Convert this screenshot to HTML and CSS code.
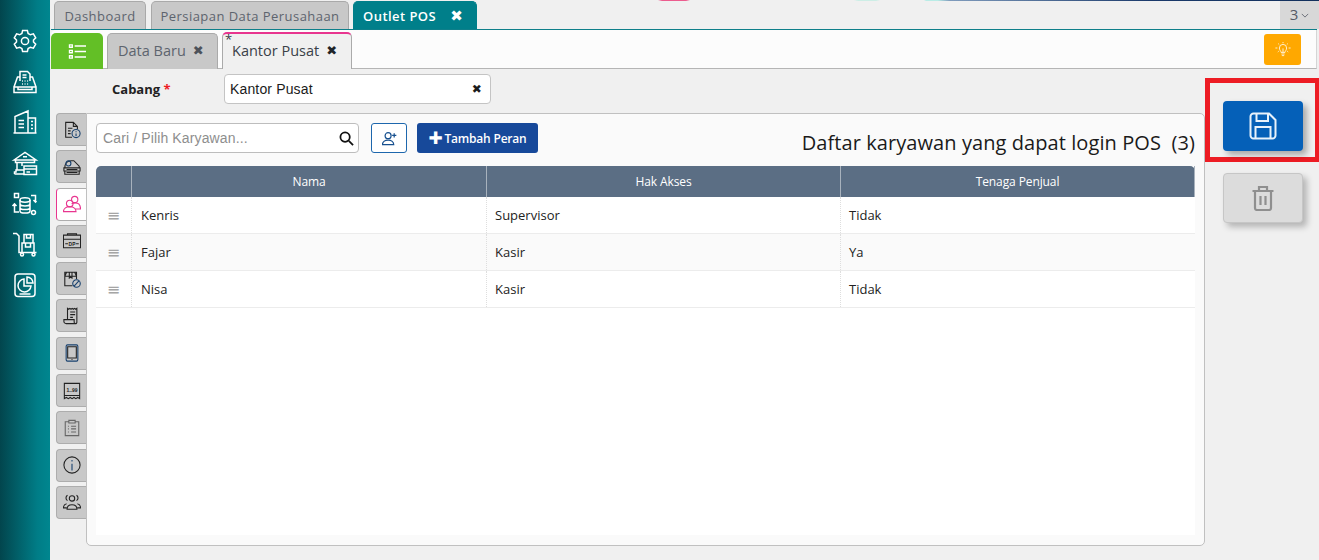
FILE: index.html
```html
<!DOCTYPE html>
<html lang="id">
<head>
<meta charset="utf-8">
<title>Outlet POS</title>
<link rel="stylesheet" href="styles.css">
</head>
<body>
<div class="app">
  <nav class="sidebar">
    <svg class="side-icon" viewBox="0 0 24 24"><path d="M9.600 1.500h4.800l.7 3 2.300 1.300 3-.9 2.300 4-2.200 2.100v2l2.200 2.100-2.300 4-3-.9-2.300 1.300-.7 3H9.600l-.7-3-2.300-1.300-3 .9-2.300-4 2.200-2.100v-2L1.300 8.900l2.300-4 3 .9 2.300-1.300z"/><circle cx="12" cy="12" r="3.600"/></svg>
    <svg class="side-icon" viewBox="0 0 24 24"><path d="M7 11V1.500h7.500L17 4v7M7 7H4.500L1 17M17 7h2.500L23 17M1 17v5.500h22V17zM5 17h14v2.500H5zM9.500 5h4M9.500 7.500h4M9 11h.9M11.600 11h.9M14.200 11h.9M9 14h.9M11.600 14h.9M14.200 14h.9"/></svg>
    <svg class="side-icon" viewBox="0 0 24 24"><path d="M.5 23h23M2 23V6.500L15 1v22M15 8h7.500v15M5.500 10.500H11M5.500 14H11M5.500 17.500H11M18 11.500h2M18 15h2M18 18.500h2"/></svg>
    <svg class="side-icon" viewBox="0 0 24 24"><path d="M1 9 12 1.500 23 9zM2.500 9v2.500h19V9M10 5.800h4M4 11.500v7.500M9 11.500V15M1.500 23v-2H3v-2h7.500M11 15h12.500v8.500H11zM11 18h12.500M13.500 21h3.500M10.500 23H1.500"/></svg>
    <svg class="side-icon" viewBox="0 0 24 24"><ellipse cx="12" cy="8" rx="5" ry="2.200"/><path d="M7 8v11c0 2.800 10 2.800 10 0V8M7 11.800c0 2.800 10 2.800 10 0M7 15.500c0 2.800 10 2.800 10 0M1.500 1.500h4v4h-4zM18 3.500h4.500V10M20.500 8l2 2.200 1-1.200M6 20H1.500v-8M-.5 14l2-2.200 2 2.200"/><circle cx="20.500" cy="20.500" r="2"/></svg>
    <svg class="side-icon" viewBox="0 0 24 24"><path d="M0 1.500h3.500L6 4v16.500h17.500M9 11h12v9.500H9zM11 2.500h9V11h-9zM13.500 2.500V6h4V2.500M12.500 11v4h5v-4"/><circle cx="9" cy="22.500" r="1.500"/><circle cx="20.500" cy="22.500" r="1.500"/></svg>
    <svg class="side-icon" viewBox="0 0 24 24"><rect x="2" y="1" width="20" height="22.500" rx="3"/><path d="M11 6a6.500 6.500 0 1 0 7 7h-7zM14 4a6 6 0 0 1 6 6h-6zM6.500 21h11"/></svg>
  </nav>

  <div class="workspace">
    <div class="top-strip"></div>
    <div class="main-tabs">
      <div class="main-tab">Dashboard</div>
      <div class="main-tab main-tab-wide">Persiapan Data Perusahaan</div>
      <div class="main-tab main-tab-active">Outlet POS <span class="main-close">&#10006;</span></div>
      <div class="tab-count">3 <svg class="chev" viewBox="0 0 10 6"><path d="M1 1l4 4 4-4"/></svg></div>
    </div>

    <div class="panel">
      <div class="sub-tabs">
        <button class="list-btn"><svg viewBox="0 0 20 18"><path d="M1.500 2h3v2.500h-3zM1.500 7.800h3v2.500h-3zM1.500 13.500h3V16h-3zM7 3.200h12M7 9h12M7 14.800h12"/></svg></button>
        <div class="sub-tab">Data Baru <span class="sub-close">&#10006;</span></div>
        <div class="sub-tab sub-tab-active"><sup class="mod">*</sup>Kantor Pusat <span class="sub-close sub-close-dark">&#10006;</span></div>
        <button class="lamp-btn"><svg viewBox="0 0 20 20"><path d="M7.500 13c0-2-2-2.500-2-5.500a4.500 4.500 0 0 1 9 0c0 3-2 3.500-2 5.500zM8 15h4M8.500 17h3M10 13V8M10 0v1.500M3 7.500H.5M19.500 7.500H17M4 2l1.200 1.200M16 2l-1.200 1.200M3.500 12.500l1.200-1M16.500 12.500l-1.200-1"/></svg></button>
      </div>

      <div class="body-grid">
        <div class="form-area">
          <div class="form-row">
            <label class="field-label">Cabang <span class="req">*</span></label>
            <div class="select-box"><span>Kantor Pusat</span><span class="select-x">&#10006;</span></div>
          </div>

          <div class="detail">
            <div class="side-tabs">
              <div class="side-tab"><svg viewBox="0 0 20 20"><path d="M10 18H3V1.500h8.500L16 6v3M11.500 1.500V6H16M5.500 8h5M5.500 11h3M5.500 14h3"/><circle class="hl" cx="14.500" cy="14" r="4.500"/><path class="hl" d="M14.500 11.500v1M14.500 13.800v3"/></svg></div>
              <div class="side-tab"><svg viewBox="0 0 20 20"><path d="M2 11c0-5 3-8 7-8h3l6 6v2zM1 11h18v3.500H1zM2 14.500h16v3.500H2zM4 16.200h12M4 12.700h12"/><circle class="hl" cx="6" cy="6" r="2.800"/></svg></div>
              <div class="side-tab side-tab-active"><svg viewBox="0 0 20 20"><circle cx="13" cy="5" r="3.500"/><path d="M9.500 9.800c1.500-1.300 6.500-1.300 8 0 1 1 2 3 2 5.700h-6"/><circle cx="7.500" cy="9.500" r="3.700"/><path d="M.5 18.500c0-7.500 14-7.500 14 0z"/></svg></div>
              <div class="side-tab"><svg viewBox="0 0 20 20"><path d="M.5 3.500h19v14H.5zM.5 8h19M5 3.500V2h10v1.500M2.500 13h3M14.500 13h3"/><text class="mini" x="10" y="15">DP</text></svg></div>
              <div class="side-tab"><svg viewBox="0 0 20 20"><path d="M10.500 17.500H2V2.500h13v7.500M2 7l2-4.500M15 7l-2-4.500M2 7h13M7 2.500V9l1.500-1L10 9V2.500"/><circle class="hl" cx="15" cy="15" r="4.200"/><path class="hl" d="M12.300 18l5.400-6"/></svg></div>
              <div class="side-tab"><svg viewBox="0 0 20 20"><path d="M5 14V1.500l1.300 1 1.300-1 1.300 1 1.300-1 1.300 1 1.300-1 1.300 1 1.300-1V17a1.500 1.500 0 0 1-3 0v-3zM13.500 18.500H3.500A2.500 2.500 0 0 1 1 16v-2h4M8 5.500h5.500M8 8.500h5.500M8 11.500h3"/></svg></div>
              <div class="side-tab"><svg viewBox="0 0 20 20"><rect class="hl" x="3.500" y="1" width="13" height="18" rx="1.500"/><path d="M5.200 3h9.600v12.500H5.200zM9.500 17.300h1"/></svg></div>
              <div class="side-tab"><svg viewBox="0 0 20 20"><path d="M1.500 1.500h17v17l-2.100-1.300-2.100 1.300-2.100-1.300-2.100 1.300-2.100-1.300-2.100 1.300-2.200-1.300-2.200 1.300zM1.500 15h17"/><text class="mini" x="10" y="11">1..99</text></svg></div>
              <div class="side-tab"><svg class="muted" viewBox="0 0 20 20"><path d="M6.500 3H2.500v15.500h15V3h-4M6.500 1.500h7v3h-7zM9 8h5.500M9 11h5.500M9 14.500h5.500M5.500 8h1M5.500 11h1M5.500 14.500h1"/></svg></div>
              <div class="side-tab"><svg viewBox="0 0 20 20"><circle cx="10" cy="10" r="9"/><path class="hl" d="M10 4.500v1.500M10 8.500V16"/></svg></div>
              <div class="side-tab"><svg viewBox="0 0 20 20"><circle cx="10" cy="6" r="3"/><path d="M5 2.500a3.500 3.500 0 0 0 0 6M15 2.500a3.500 3.500 0 0 1 0 6M4.500 18c0-6.500 11-6.500 11 0zM4 16.500H.5c0-2.500 1-4 3.500-4.500M16 16.500h3.500c0-2.500-1-4-3.500-4.500"/></svg></div>
            </div>

            <section class="card">
              <div class="toolbar">
                <div class="search-box"><span class="placeholder">Cari / Pilih Karyawan...</span><svg class="search-icon" viewBox="0 0 16 16"><circle cx="6.500" cy="6.500" r="5"/><path d="M10.500 10.500l4.500 4.500"/></svg></div>
                <button class="user-btn"><svg viewBox="0 0 16 16"><circle cx="6.500" cy="5" r="3.200"/><path d="M.5 14.500c0-6.500 12-6.500 12 0zM13 2.500v4.500M10.800 4.700h4.500"/></svg></button>
                <button class="add-btn"><span class="plus">&#10010;</span>Tambah Peran</button>
                <h2 class="list-title">Daftar karyawan yang dapat login POS&nbsp; (3)</h2>
              </div>
              <div class="table">
                <div class="row head">
                  <div class="cell"></div><div class="cell">Nama</div><div class="cell">Hak Akses</div><div class="cell">Tenaga Penjual</div>
                </div>
                <div class="row">
                  <div class="cell handle">&#8801;</div><div class="cell">Kenris</div><div class="cell">Supervisor</div><div class="cell">Tidak</div>
                </div>
                <div class="row alt">
                  <div class="cell handle">&#8801;</div><div class="cell">Fajar</div><div class="cell">Kasir</div><div class="cell">Ya</div>
                </div>
                <div class="row">
                  <div class="cell handle">&#8801;</div><div class="cell">Nisa</div><div class="cell">Kasir</div><div class="cell">Tidak</div>
                </div>
              </div>
            </section>
          </div>
        </div>

        <aside class="actions">
          <div class="save-mark">
            <button class="save-btn"><svg viewBox="0 0 28 28"><path d="M1.500 4.500a3 3 0 0 1 3-3h15.500l6.500 6.500v15.500a3 3 0 0 1-3 3h-19a3 3 0 0 1-3-3zM7.500 1.500v7.500h11.500V1.500M6.500 26.500V15h15v11.500"/></svg></button>
          </div>
          <button class="del-btn"><svg viewBox="0 0 24 26"><path d="M1.500 6h21M8 6V2h8v4M4 6v17a2 2 0 0 0 2 2h12a2 2 0 0 0 2-2V6M9.500 11v9M14.500 11v9"/></svg></button>
        </aside>
      </div>
    </div>
  </div>
</div>
</body>
</html>
```

FILE: styles.css
```css
* { box-sizing: border-box; }
html, body { margin: 0; height: 100%; }
body { font-family: "Open Sans", "Noto Sans", sans-serif; background: #f0f0f0; overflow: hidden; }
button { padding: 0; border: 0; font: inherit; }
svg { display: block; fill: none; stroke: currentColor; }

.app { display: flex; height: 560px; }

.sidebar {
  width: 50px; flex: none; padding-top: 29px;
  background: linear-gradient(90deg, #02454d 0%, #007d87 75%, #00868f 100%);
  display: flex; flex-direction: column; align-items: center; gap: 16.700px;
}
.side-icon { width: 24px; height: 24px; color: #fff; stroke-width: 1.500; overflow: visible; }

.workspace { flex: 1; min-width: 0; display: flex; flex-direction: column; background: #f0f0f0; }
.top-strip {
  height: 1px; flex: none;
  background: linear-gradient(90deg, #f0f0f0 0 608px, #ec5c8e 612px 636px, #f0f0f0 640px 804px, #cdeee6 808px 826px, #f0f0f0 830px 874px, #b9ece6 876px 888px, #7f9bbc 900px, #1b3a6b 1100px, #12305c 100%);
}

.main-tabs { display: flex; height: 28px; flex: none; padding-left: 4px; gap: 5px; }
.main-tab {
  width: 92px; display: flex; align-items: center; justify-content: center;
  background: #c8c8c8; border: 1px solid #a9a9a9; border-bottom: 0; border-radius: 5px 5px 0 0;
  font-size: 13px; letter-spacing: .45px; color: #5d646e; white-space: nowrap;
}
.main-tab-wide { width: 198px; }
.main-tab-active {
  width: 124px; margin-left: -1px; background: #007f8a; border-color: #007f8a; color: #fff; font-weight: 600; justify-content: flex-start; padding-left: 9px;
}
.main-close { margin-left: 14px; font-size: 15px; font-family: "DejaVu Sans", sans-serif; }
.tab-count {
  margin-left: auto; width: 39px; background: #d8d8d8; color: #555b66; font-size: 15px;
  display: flex; align-items: center; justify-content: center; gap: 3px; padding-bottom: 2px;
}
.chev { width: 8px; height: 5px; stroke-width: 1; margin-top: 2px; }

.panel {
  flex: 1; min-height: 0; margin: 0 2px 0 1px; display: flex; flex-direction: column;
  border-top: 1px solid #0e7f8a;
}
.sub-tabs {
  height: 39px; flex: none; display: flex; align-items: flex-end; gap: 4px;
  background: #fcfcfc; border-bottom: 1px solid #b5b5b5; border-right: 1px solid #d5d5d5; border-radius: 5px 0 0 0;
}
.list-btn {
  width: 52px; height: 36px; background: #63bf26; color: #fff; border-radius: 5px 5px 0 0;
  display: flex; align-items: center; justify-content: center; margin-bottom: -1px;
}
.list-btn svg { width: 19px; height: 17px; stroke-width: 1.400; }
.sub-tab {
  width: 111px; height: 36px; background: #c8c8c8; border: 1px solid #aaa; border-bottom: 0; border-radius: 5px 5px 0 0;
  font-size: 14.500px; color: #5d646e; display: flex; align-items: center; justify-content: flex-start; padding: 0 0 2px 10px; gap: 7px; margin-bottom: -1px;
}
.sub-tab-active {
  position: relative; width: 130px; height: 37px; background: #f0f0f0; color: #3a4048; border-top: 2px solid #e8358f; padding-left: 9px; gap: 7px;
}
.mod { position: absolute; left: 2px; top: -1px; font-size: 13px; line-height: 1; }
.sub-close { font-family: "DejaVu Sans", sans-serif; font-size: 13px; color: #4d525a; }
.sub-close-dark { color: #1f2428; }
.lamp-btn {
  margin: 0 15px 3px auto; width: 37px; height: 31px; align-self: flex-end; background: #ffa800; color: #fff; border-radius: 3px;
  display: flex; align-items: center; justify-content: center;
}
.lamp-btn svg { width: 16px; height: 16px; stroke-width: 1; }

.body-grid { flex: 1; min-height: 0; display: flex; }
.form-area { flex: 1; min-width: 0; display: flex; flex-direction: column; }

.form-row { height: 44px; flex: none; display: flex; align-items: flex-start; padding: 5px 0 0 61px; }
.field-label { width: 112px; line-height: 30px; font-size: 13px; font-weight: 700; color: #222; }
.req { color: #ed1c24; }
.select-box {
  width: 267px; height: 30px; background: #fff; border: 1px solid #c4c4c4; border-radius: 4px;
  display: flex; align-items: center; justify-content: space-between; padding: 0 8px 0 5px;
  font-family: "Liberation Sans", Arial, sans-serif; font-size: 14px; letter-spacing: .15px; color: #1b1b1b;
}
.select-x { font-family: "DejaVu Sans", sans-serif; font-size: 12px; color: #1c1c1c; }

.detail { flex: 1; min-height: 0; display: flex; padding: 0 0 14px 5px; }
.side-tabs { width: 30px; flex: none; display: flex; flex-direction: column; gap: 4.300px; }
.side-tab {
  height: 33px; background: #c8c8c8; border: 1px solid #adadad; border-right: 0; border-radius: 4px 0 0 4px;
  display: flex; align-items: center; justify-content: center; color: #222;
}
.side-tab svg { width: 18px; height: 18px; stroke-width: 1.200; }
.side-tab .hl { stroke: #17406e; }
.side-tab .muted { color: #666; }
.side-tab-active { background: #fff; border-left: 1px solid #e8358f; color: #e8358f; }
.mini { font: 700 5.500px "Liberation Sans", sans-serif; text-anchor: middle; stroke: none; fill: currentColor; }

.card {
  flex: 1; min-width: 0; background: #fafafa; border: 1px solid #c0c0c0; border-radius: 0 5px 5px 5px; padding: 9px 9px 10px 9px;
  display: flex; flex-direction: column;
}
.toolbar { height: 43px; flex: none; display: flex; align-items: flex-start; }
.search-box {
  width: 263px; height: 30px; background: #fff; border: 1px solid #bdbdbd; border-radius: 4px;
  display: flex; align-items: center; justify-content: space-between; padding: 0 4px 0 6px;
}
.placeholder { font-family: "Liberation Sans", Arial, sans-serif; font-size: 14px; letter-spacing: .13px; color: #8e8e8e; }
.search-icon { width: 15px; height: 15px; color: #111; stroke-width: 1.900; }
.user-btn {
  margin-left: 12px; width: 36px; height: 30px; background: #fff; border: 1px solid #1d67ad; border-radius: 3px; color: #17508f;
  display: flex; align-items: center; justify-content: center;
}
.user-btn svg { width: 15px; height: 15px; stroke-width: 1.300; }
.add-btn {
  margin-left: 10px; width: 121px; height: 30px; background: #17499a; color: #fff; border-radius: 3px;
  font-family: "Open Sans", sans-serif; font-size: 12px; font-weight: 600; letter-spacing: -.2px;
  display: flex; align-items: center; justify-content: center; gap: 2px;
}
.plus { font-family: "DejaVu Sans", sans-serif; font-size: 17px; line-height: 1; }
.list-title { margin: 8px 0 0 auto; font-size: 20px; letter-spacing: .08px; font-weight: 400; color: #1a1a1a; white-space: nowrap; line-height: 24px; }

.table { flex: 1; min-height: 0; background: #fff; }
.row { display: grid; grid-template-columns: 36px 355px 354px 354px; height: 37px; border-bottom: 1px solid #ececec; font-size: 13px; color: #222; }
.row.alt { background: #fafafa; }
.cell { display: flex; align-items: center; padding-left: 9px; border-right: 1px dotted #dedede; }
.cell + .cell + .cell { padding-left: 8px; }
.cell:last-child { border-right: 0; }
.handle { justify-content: center; padding: 0; color: #a5a5a5; font-size: 16px; font-family: "DejaVu Sans", sans-serif; }
.head { height: 31px; background: #5b6e84; color: #fff; border: 0; border-radius: 5px 5px 0 0; font-size: 12px; font-weight: 500; letter-spacing: -.1px; }
.head .cell, .head .cell + .cell + .cell { justify-content: center; padding: 0; border-right: 1px solid #a8b2bd; }

.actions { width: 112px; flex: none; padding-top: 9px; }
.save-mark {
  width: 114px; height: 84px; border: 5px solid #ed1c24; border-right-width: 4px; padding: 18px 0 0 13px; margin-right: -2px;
}
.save-btn {
  display: flex; width: 80px; height: 50px; background: #0560b8; color: #fff; border-radius: 4px; box-shadow: 4px 4px 6px rgba(0,0,0,.3);
  align-items: center; justify-content: center;
}
.save-btn svg { width: 28px; height: 28px; stroke-width: 2; color: #e8f2fb; }
.del-btn {
  margin: 11px 0 0 18px; width: 80px; height: 50px; background: #dcdcdc; border: 1px solid #c6c6c6; border-radius: 4px; box-shadow: 4px 4px 6px rgba(0,0,0,.25);
  display: flex; align-items: center; justify-content: center; color: #8f8f8f;
}
.del-btn svg { width: 24px; height: 26px; stroke-width: 2.200; }
```
